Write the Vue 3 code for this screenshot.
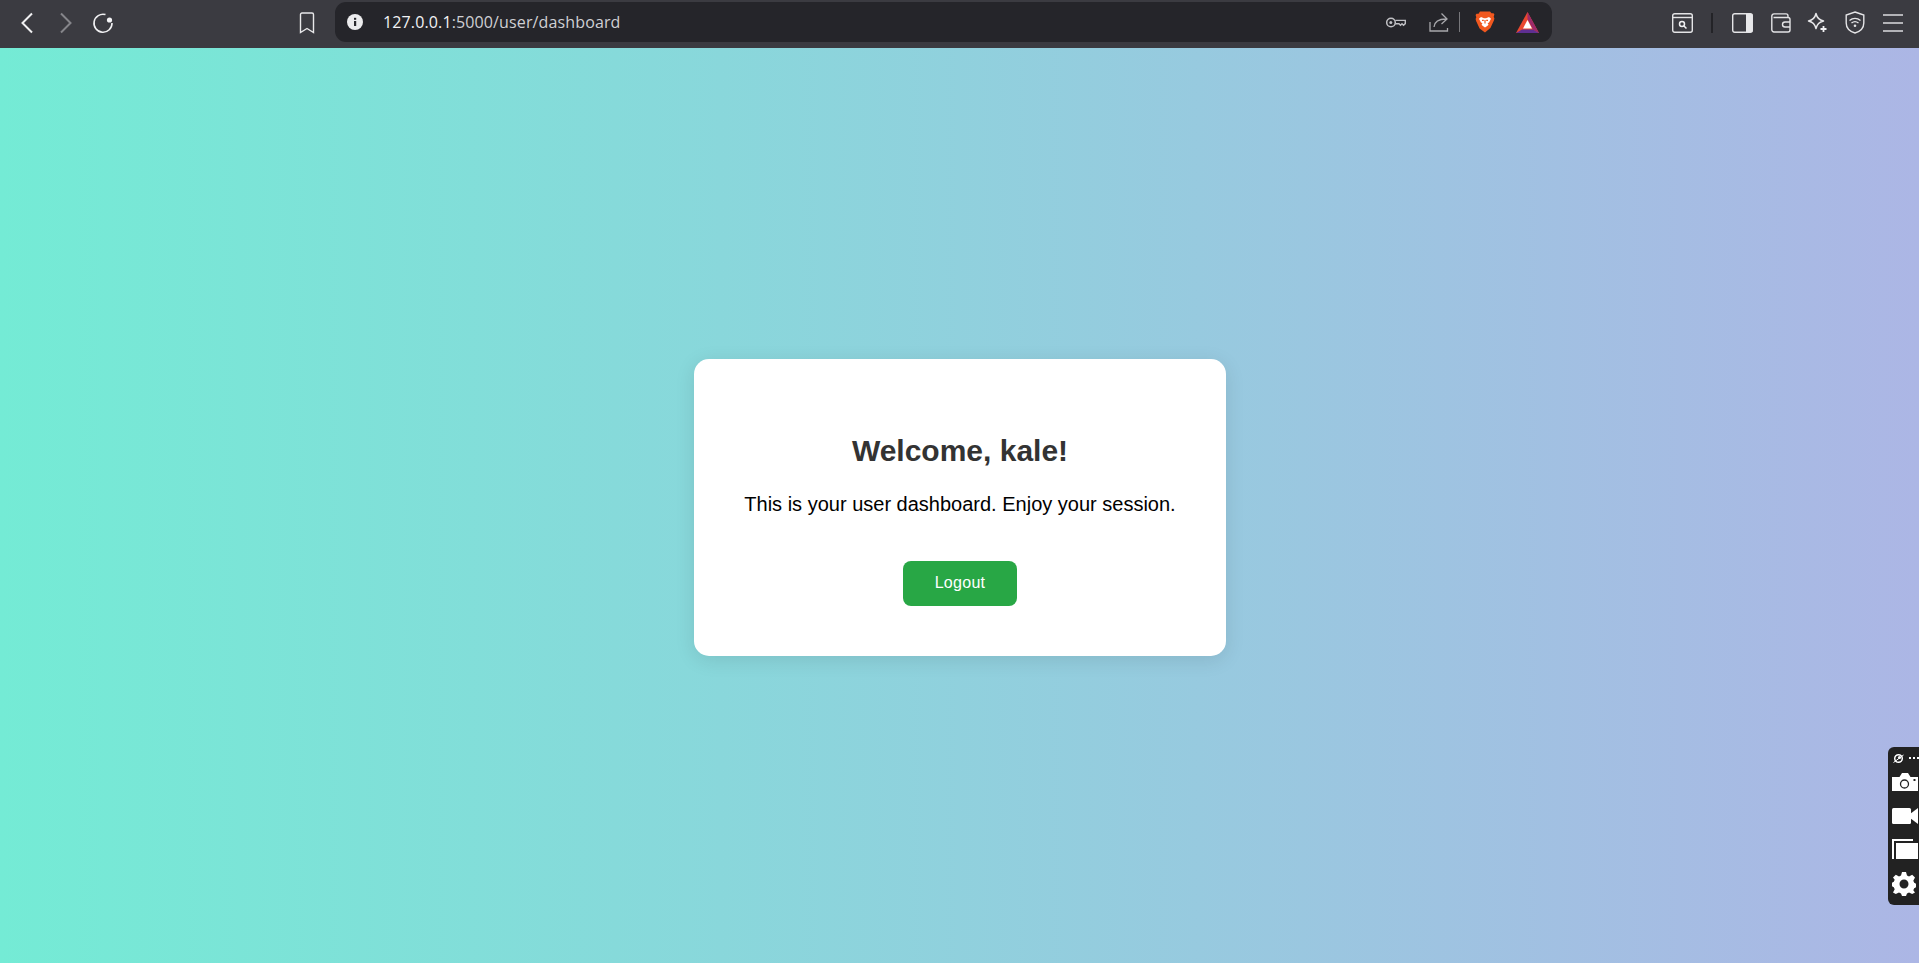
<script setup>
</script>

<template>
  <div class="page">
    <header class="toolbar">
      <div class="nav">
        <svg class="ic back" width="14" height="22" viewBox="0 0 14 22"><path d="M12 1.500 2.500 11 12 20.500" fill="none" stroke="#f0f0f2" stroke-width="2"/></svg>
        <svg class="ic fwd" width="14" height="22" viewBox="0 0 14 22"><path d="M2 1.500 11.500 11 2 20.500" fill="none" stroke="#85858a" stroke-width="2"/></svg>
        <svg class="ic reload" width="22" height="22" viewBox="0 0 22 22"><path d="M13.500 2.600A9 9 0 1 0 20 11" fill="none" stroke="#f0f0f2" stroke-width="1.600"/><circle cx="17.500" cy="8" r="2.600" fill="#f4f4f6"/></svg>
        <svg class="ic mark" width="16" height="22" viewBox="0 0 16 22"><path d="M1.500 2.500a1.500 1.500 0 0 1 1.500-1.500h10a1.500 1.500 0 0 1 1.500 1.500v18L8 16.500l-6.500 4z" fill="none" stroke="#e8e8ea" stroke-width="1.400"/></svg>
      </div>
      <div class="urlbar">
        <svg class="info" width="16" height="16" viewBox="0 0 16 16"><circle cx="8" cy="8" r="8" fill="#ececee"/><rect x="7" y="7" width="2.200" height="5" fill="#2a2a2e"/><rect x="7" y="3.800" width="2.200" height="2" fill="#2a2a2e"/></svg>
        <div class="url"><span class="host">127.0.0.1</span><span class="rest">:5000/user/dashboard</span></div>
        <svg class="key" width="20" height="11" viewBox="0 0 20 11"><circle cx="5" cy="5.500" r="4.300" fill="none" stroke="#c0c0c4" stroke-width="1.500"/><circle cx="4.800" cy="5.500" r="1.500" fill="#c0c0c4"/><path d="M9.300 3.400h10v3.200l-1.800 1.700-1.500-1.500-1.500 1.500-1.500-1.500H9.300" fill="none" stroke="#c0c0c4" stroke-width="1.400"/></svg>
        <svg class="share" width="20" height="20" viewBox="0 0 20 20"><path d="M1 10v9h17.500v-3M5 15c.5-5 4-8 12-8M12.500 1.500 18 7l-5.500 5" fill="none" stroke="#a8a8ac" stroke-width="1.300"/></svg>
        <span class="sep"></span>
        <svg class="brave" width="20" height="22" viewBox="0 0 20 22"><path d="M5 .5h10l1.500 1.700 2 0 .9 1.400-.7 2.200.7 1.800-.5 2-3.500 7.500L10 21.500 4.600 17.600 1.100 10.100.6 8.100l.7-1.800L.6 4.100 1.500 2.700l2 0z" fill="#f1581f"/><path d="M6 6 9 7.200h2L14 6l2 1.800-1.800 3.400-1.600 1.300 1 1.300-1.400 1.200L10 16.500 7.900 15 6.500 13.800l1-1.300L5.800 11.200 4 7.800z" fill="#fff"/><path d="M10 9v3.500M7 9.300h1.800M11.200 9.300H13" stroke="#f1581f" stroke-width="1.200"/></svg>
        <svg class="bat" width="23" height="21" viewBox="0 0 23 21"><path d="M11.500 0 23 21H0z" fill="#e9472f"/><path d="M11.500 0 23 21 17 17.500 11.500 7z" fill="#9c2a6a"/><path d="M0 21l6-3.500h11l6 3.500z" fill="#5f2f92"/><path d="M11.500 8 16 16.500H7z" fill="#fff"/></svg>
      </div>
      <div class="tools">
        <svg width="21" height="20" viewBox="0 0 21 20"><rect x=".7" y=".7" width="19.600" height="18.600" rx="2" fill="none" stroke="#e4e4e6" stroke-width="1.400"/><path d="M1 4.500h19" stroke="#e4e4e6" stroke-width="1.400"/><circle cx="10" cy="11" r="2.500" fill="none" stroke="#f0f0f2" stroke-width="1.500"/><path d="m12 13 2.500 2.500" stroke="#f0f0f2" stroke-width="1.500"/></svg>
        <span class="darksep"></span>
        <svg width="21" height="20" viewBox="0 0 21 20"><rect x=".7" y=".7" width="19.600" height="18.600" rx="2" fill="none" stroke="#e4e4e6" stroke-width="1.400"/><path d="M14 1h5.500a1 1 0 0 1 1 1v16a1 1 0 0 1-1 1H14z" fill="#e8e8ea"/></svg>
        <svg width="20" height="20" viewBox="0 0 20 20"><path d="M3 .9h12a2 2 0 0 1 2 2V4.500M2.500 4.500h14.500a2 2 0 0 1 2 2v10.500a2 2 0 0 1-2 2H3a2.200 2.200 0 0 1-2.200-2.200V3.300A2.400 2.400 0 0 1 3 .9" fill="none" stroke="#e4e4e6" stroke-width="1.400"/><path d="M19 9h-5a2.500 2.500 0 0 0 0 5h5" fill="none" stroke="#e4e4e6" stroke-width="1.400"/></svg>
        <svg width="21" height="21" viewBox="0 0 21 21"><path d="M9 1.500c1 4.500 3 6.500 7.500 7.500-4.500 1-6.500 3-7.500 7.500C8 12 6 10 1.500 9 6 8 8 6 9 1.500z" fill="none" stroke="#e8e8ea" stroke-width="1.500" stroke-linejoin="round"/><path d="M16.500 14v6M13.500 17h6" stroke="#f2f2f4" stroke-width="1.800"/></svg>
        <svg width="20" height="23" viewBox="0 0 20 23"><path d="M10 1 18.800 4v8c0 5-3.800 8.500-8.800 10C5 20.500 1.200 17 1.200 12V4z" fill="none" stroke="#e4e4e6" stroke-width="1.400"/><path d="M4.500 9.500c3.300-2.800 7.700-2.800 11 0M6.500 12c2.200-1.700 4.800-1.700 7 0" fill="none" stroke="#e4e4e6" stroke-width="1.400"/><circle cx="10" cy="14.800" r="1.300" fill="#e4e4e6"/></svg>
        <svg width="20" height="18" viewBox="0 0 20 18"><path d="M0 1h20M0 9h20M0 17h20" stroke="#dcdcde" stroke-width="1.600"/></svg>
      </div>
    </header>

    <main class="stage">
      <section class="card">
        <h2>Welcome, kale!</h2>
        <p>This is your user dashboard. Enjoy your session.</p>
        <button class="logout">Logout</button>
      </section>
    </main>

    <aside class="dock">
      <div class="dock-top">
        <svg width="11" height="11" viewBox="0 0 11 11"><circle cx="5.500" cy="5.500" r="3.800" fill="none" stroke="#fff" stroke-width="1.500"/><circle cx="6.500" cy="4.500" r="1.600" fill="#fff"/><path d="M.5 9.500 10.500 2" stroke="#fff" stroke-width="1"/></svg>
        <span class="dots"><i></i><i></i><i></i></span>
      </div>
      <svg class="d cam" width="26" height="18" viewBox="0 0 26 18"><path d="M0 4h7.500L10 0h6l2.500 4H26v14H0z" fill="#fff"/><circle cx="12.500" cy="11" r="4" fill="none" stroke="#222" stroke-width="1.300"/><rect x="21.500" y="6" width="2" height="2" fill="#222"/></svg>
      <svg class="d vid" width="26" height="18" viewBox="0 0 26 18"><rect y="1" width="19" height="16" rx="1.500" fill="#fff"/><path d="M18 7 26 1v16l-8-6z" fill="#fff"/></svg>
      <svg class="d stack" width="26" height="20" viewBox="0 0 26 20"><path d="M0 20V0h21v2H2v18z" fill="#fff"/><rect x="4" y="4" width="22" height="16" fill="#fff"/></svg>
      <svg class="d gear" width="24" height="24" viewBox="0 0 24 24"><path fill-rule="evenodd" fill="#fff" d="M10 0h4l1 3.500 2 .9L20.200 2.700 23 5.500l-1.700 3.200.9 2 1.800 1v3.600l-1.800 1-.9 2L23 20.500 20.200 22 17 20.500l-2 .9-1 2.600h-4l-1-2.600-2-.9L3.800 22 1 20.500l1.700-3.200-.9-2-1.800-1v-3.600l1.800-1 .9-2L1 5.500l2.800-2.800L7 4.400l2-.9zM12 7.500a4.500 4.500 0 1 0 0 9 4.500 4.500 0 0 0 0-9z"/></svg>
    </aside>
  </div>
</template>

<style>
html, body { margin: 0; padding: 0; }
</style>

<style scoped>
.page {
  position: relative;
  display: flex;
  flex-direction: column;
  width: 100%;
  height: 963px;
  overflow: hidden;
  font-family: "Liberation Sans", Arial, sans-serif;
}
.toolbar {
  display: flex;
  align-items: center;
  flex: 0 0 48px;
  height: 48px;
  background: #3b3b41;
  box-sizing: border-box;
}
.nav { display: flex; align-items: center; width: 335px; flex: none; margin-top: -3px; }
.ic { flex: none; display: block; }
.back { margin-left: 20px; }
.fwd { margin-left: 25px; }
.reload { margin-left: 19px; }
.mark { margin-left: 185px; }
.urlbar {
  display: flex;
  align-items: center;
  width: 1217px;
  height: 40px;
  margin-top: -4px;
  background: #25252a;
  border-radius: 11px;
  flex: none;
}
.info { margin-left: 12px; flex: none; }
.url {
  margin-left: 20px;
  flex: 1;
  font: 16px "Open Sans", sans-serif;
  letter-spacing: 0.13px;
  white-space: nowrap;
}
.host { color: #f2f2f4; }
.rest { color: #d0d0d4; }
.key { flex: none; }
.share { margin-left: 23px; flex: none; }
.sep { width: 1px; height: 20px; background: #77777b; margin-left: 10px; flex: none; }
.brave { margin-left: 15px; flex: none; }
.bat { margin-left: 21px; margin-right: 13px; flex: none; }
.tools { display: flex; align-items: center; margin-left: 120px; margin-top: -3px; }
.tools svg { flex: none; display: block; }
.tools svg:nth-of-type(2) { margin-left: 19px; }
.tools svg:nth-of-type(3) { margin-left: 18px; }
.tools svg:nth-of-type(4) { margin-left: 16px; }
.tools svg:nth-of-type(5) { margin-left: 17px; }
.tools svg:nth-of-type(6) { margin-left: 18px; }
.darksep { width: 2px; height: 20px; background: #232327; margin-left: 18px; flex: none; }
.stage {
  flex: 1;
  display: flex;
  align-items: center;
  justify-content: center;
  padding-top: 4px;
  background: linear-gradient(to right, #74ebd5, #acb6e5);
}
.card {
  width: 532px;
  margin-left: 1px;
  box-sizing: border-box;
  padding: 50px 0;
  background: #fff;
  border-radius: 15px;
  box-shadow: 0 4px 20px rgba(0, 0, 0, 0.1);
  text-align: center;
}
h2 {
  margin: 25px 0;
  font-size: 30px;
  line-height: 34px;
  font-weight: 700;
  color: #333;
}
p {
  margin: 0 0 20px;
  font-size: 20px;
  line-height: 23px;
  color: #000;
  white-space: nowrap;
}
.logout {
  display: inline-block;
  width: 114px;
  height: 45px;
  margin-top: 25px;
  padding: 0 0 2px;
  border: 0;
  border-radius: 8px;
  background: #28a745;
  color: #fff;
  font: 16px "Liberation Sans", Arial, sans-serif;
  letter-spacing: 0.3px;
}
.dock {
  position: absolute;
  right: 0;
  top: 747px;
  width: 31px;
  height: 158px;
  background: #222;
  border-radius: 6px 0 0 6px;
  display: flex;
  flex-direction: column;
  align-items: flex-start;
  overflow: hidden;
}
.dock-top { display: flex; align-items: center; height: 22px; padding-left: 5px; gap: 5px; flex: none; }
.dock-top svg { display: block; }
.dots { display: flex; gap: 2px; }
.dots i { width: 2px; height: 2px; background: #fff; display: block; }
.d { margin-left: 4px; flex: none; display: block; }
.cam { margin-top: 4px; }
.vid { margin-top: 16px; }
.stack { margin-top: 14px; }
.gear { margin-top: 13px; }
</style>
